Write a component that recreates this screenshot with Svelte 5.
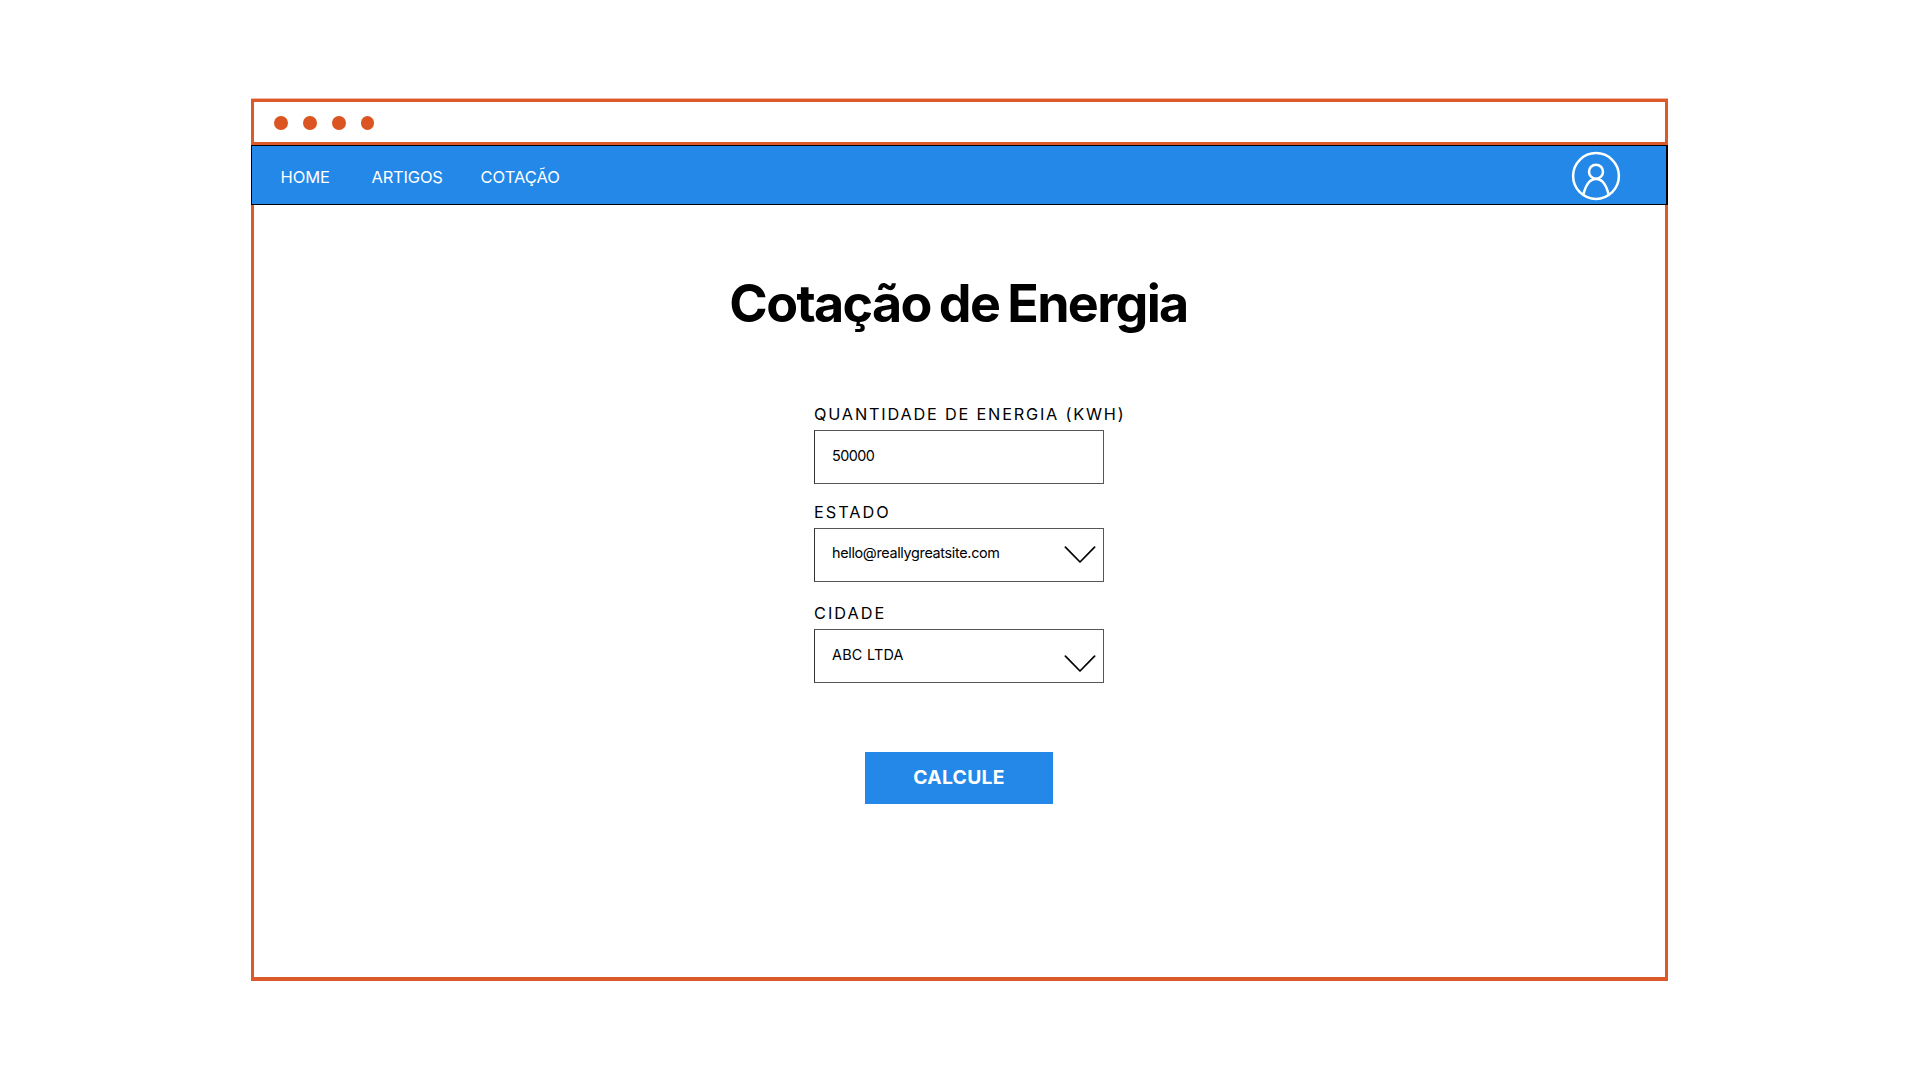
<script>
  const dots = [0, 1, 2, 3];
  const links = [
    { id: 'home', label: 'HOME' },
    { id: 'articles', label: 'ARTIGOS' },
    { id: 'quote', label: 'COTAÇÃO' }
  ];
  const fields = [
    { id: 'amount', label: 'QUANTIDADE DE ENERGIA (KWH)', value: '50000', select: false },
    { id: 'state', label: 'ESTADO', value: 'hello@reallygreatsite.com', select: true },
    { id: 'city', label: 'CIDADE', value: 'ABC LTDA', select: true }
  ];
</script>

<main class="page">
  <div class="window">
    <div class="titlebar">
      {#each dots as dot (dot)}<i class="dot"></i>{/each}
    </div>
    <nav class="navbar">
      {#each links as link (link.id)}
        <a class="link {link.id}" href="#{link.id}">{link.label}</a>
      {/each}
      <svg class="avatar" width="50" height="50" viewBox="0 0 50 50" aria-hidden="true">
        <circle cx="25" cy="25" r="22.9" />
        <circle cx="25" cy="20.7" r="7" />
        <path d="M12.4 43.8C14.6 34 18.6 28 25 28S35.4 34 37.6 43.8" />
      </svg>
    </nav>
    <section class="content">
      <h1>Cotação de Energia</h1>
      <form class="form">
        {#each fields as field (field.id)}
          <div class="field {field.id}">
            <span class="label">{field.label}</span>
            <div class="box">
              <span class="value">{field.value}</span>
              {#if field.select}
                <svg class="chevron" width="32" height="18" viewBox="0 0 32 18" aria-hidden="true">
                  <path d="M1.4 1.2L16 16L30.6 1.2" />
                </svg>
              {/if}
            </div>
          </div>
        {/each}
        <button type="button">CALCULE</button>
      </form>
    </section>
  </div>
</main>

<style>
  :global(body) {
    background: #fff;
  }
  .page {
    box-sizing: border-box;
    width: 1920px;
    height: 1080px;
    padding: 99px 252px 99px 251px;
    font-family: Inter, 'Liberation Sans', sans-serif;
    color: #000;
    overflow: hidden;
  }
  .window {
    box-sizing: border-box;
    width: 1417px;
    height: 882px;
    border: 3px solid #dc5a29;
    border-bottom-width: 4px;
    box-shadow: 0 -1px 0 #f0b7a2;
  }
  .titlebar {
    box-sizing: border-box;
    height: 43px;
    padding: 0 0 0 20.3px;
    display: flex;
    align-items: center;
    gap: 15px;
    border-bottom: 3px solid #dc5a29;
  }
  .dot {
    width: 13.8px;
    height: 13.8px;
    border-radius: 50%;
    background: #db5522;
    margin-top: 2px;
  }
  .navbar {
    box-sizing: border-box;
    height: 60px;
    margin: 0 -3px;
    padding: 0 45px 0 28.5px;
    display: flex;
    align-items: center;
    border: 1px solid #000;
    border-right-width: 2px;
    background: #2388e7;
  }
  .link {
    color: #fff;
    font-size: 16.5px;
    line-height: 20px;
    text-decoration: none;
    white-space: nowrap;
    padding-top: 3px;
  }
  .home {
    width: 91px;
    letter-spacing: -0.1px;
  }
  .articles {
    width: 109px;
    letter-spacing: -0.2px;
  }
  .avatar {
    margin: 2px 0 0 auto;
    fill: none;
    stroke: #fff;
    stroke-width: 2.5;
  }
  .content {
    display: flex;
    flex-direction: column;
    align-items: center;
  }
  h1 {
    margin: 67px 2px 0 0;
    font-size: 52px;
    line-height: 64px;
    font-weight: 700;
    letter-spacing: -1.65px;
    word-spacing: -2.7px;
    white-space: nowrap;
  }
  .form {
    width: 290px;
    display: flex;
    flex-direction: column;
    align-items: stretch;
    margin: 68px 1px 0 0;
  }
  .field {
    display: flex;
    flex-direction: column;
  }
  .label {
    font-size: 16.3px;
    line-height: 20px;
    letter-spacing: 2px;
    white-space: nowrap;
    margin-bottom: 6px;
  }
  .amount .label { letter-spacing: 1.8px; }
  .box {
    box-sizing: border-box;
    height: 54px;
    padding: 0 7px 0 17px;
    display: flex;
    align-items: center;
    justify-content: space-between;
    border: 1px solid #555;
    border-left-color: #333;
  }
  .value {
    font-size: 14.4px;
    line-height: 20px;
    white-space: nowrap;
    padding-bottom: 2px;
    letter-spacing: -0.55px;
  }
  .state .value {
    letter-spacing: -0.33px;
    padding-bottom: 4px;
  }
  .city .value { letter-spacing: 0.25px; }
  .state { margin-top: 18px; }
  .city { margin-top: 21px; }
  .chevron {
    fill: none;
    stroke: #000;
    stroke-width: 1.7;
    stroke-linecap: round;
    stroke-linejoin: round;
  }
  .city .chevron { margin-top: 16px; }
  button {
    align-self: center;
    width: 188px;
    height: 52px;
    margin: 69px 0 0;
    padding: 0 0 2px;
    border: 0;
    background: #2388e7;
    color: #fff;
    font: 700 19.3px/24px Inter, 'Liberation Sans', sans-serif;
    letter-spacing: 0.3px;
  }
</style>
